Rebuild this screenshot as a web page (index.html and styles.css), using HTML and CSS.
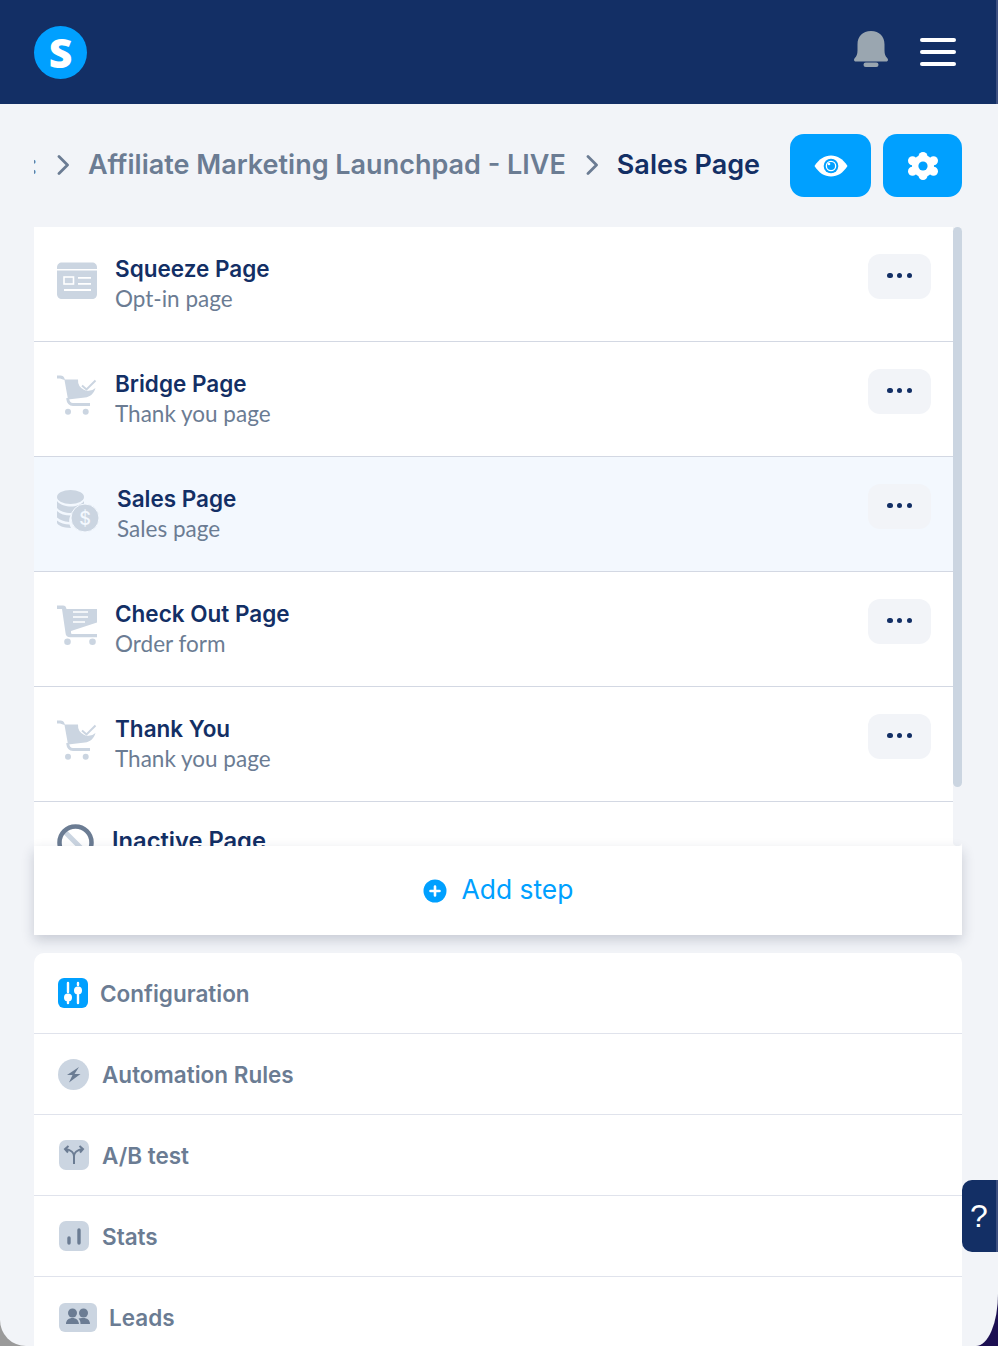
FILE: index.html
```html
<!DOCTYPE html>
<html lang="en">
<head>
    <meta charset="UTF-8">
    <meta name="viewport" content="width=device-width, initial-scale=1.0">
    <title>Sales Page</title>
    <link rel="stylesheet" href="styles.css">
</head>
<body>
    <div class="page">
        <header class="topbar">
            <div class="logo">S</div>
            <div class="topbar-actions">
                <svg class="bell" viewBox="0 0 34 36" width="34" height="36">
                    <path d="M17 0C8.500 0 3.500 5.500 3.500 13.500v6c0 3.500-1 6-2.700 7.500C-.5 28.500-.3 30.500 2 30.500h30c2.300 0 2.500-2 1.200-3.500-1.700-1.500-2.700-4-2.700-7.500v-6C30.500 5.500 25.500 0 17 0z" fill="#9aa6b0"/>
                    <rect x="9.500" y="31.500" width="15" height="4.500" rx="2.200" fill="#9aa6b0"/>
                </svg>
                <div class="burger"><span></span><span></span><span></span></div>
            </div>
        </header>

        <div class="crumb-row">
            <nav class="crumbs">
                <span class="crumb-cut">:</span>
                <svg class="chev" viewBox="0 0 12 20" width="12" height="20"><path d="M2 1.500l8.500 8.500L2 18.500" fill="none" stroke="#6b7c93" stroke-width="2.800" stroke-linecap="round" stroke-linejoin="round"/></svg>
                <span class="crumb">Affiliate Marketing Launchpad - LIVE</span>
                <svg class="chev" viewBox="0 0 12 20" width="12" height="20"><path d="M2 1.500l8.500 8.500L2 18.500" fill="none" stroke="#6b7c93" stroke-width="2.800" stroke-linecap="round" stroke-linejoin="round"/></svg>
                <span class="crumb current">Sales Page</span>
            </nav>
            <button class="blue-btn eye-btn">
                <svg viewBox="0 0 34 22" width="34" height="22">
                    <path d="M0.500 11C5 4 10.500 0.500 17 0.500S29 4 33.500 11C29 18 23.500 21.500 17 21.500S5 18 0.500 11z" fill="#fff"/>
                    <circle cx="17" cy="11" r="7.300" fill="#00a0ff"/>
                    <circle cx="17" cy="11" r="5.300" fill="#fff"/>
                    <circle cx="17" cy="11" r="4" fill="#00a0ff"/>
                    <circle cx="15" cy="9" r="1.300" fill="#fff"/>
                </svg>
            </button>
            <button class="blue-btn gear-btn">
                <svg viewBox="0 0 30 28" width="30" height="28">
                    <g fill="#fff">
                        <circle cx="15" cy="14" r="11"/>
                        <circle cx="15" cy="4.500" r="4.500"/>
                        <circle cx="15" cy="23.500" r="4.500"/>
                        <circle cx="4.500" cy="8.800" r="4.500"/>
                        <circle cx="25.500" cy="8.800" r="4.500"/>
                        <circle cx="4.500" cy="19.200" r="4.500"/>
                        <circle cx="25.500" cy="19.200" r="4.500"/>
                    </g>
                    <circle cx="15" cy="14" r="4.600" fill="#00a0ff"/>
                </svg>
            </button>
        </div>

        <section class="steps-card">
            <div class="steps">
                <div class="step">
                    <svg class="step-icon" viewBox="0 -2 40 41" width="40" height="41">
                        <path d="M0 5.500C0 2.500 2 0.500 5 0.500h30c3 0 5 2 5 5V7H0z" fill="#cbd5e1"/>
                        <path d="M0 8.500h40V32c0 3-2 5-5 5H5c-3 0-5-2-5-5z" fill="#cbd5e1"/>
                        <rect x="7" y="15" width="9.500" height="7" fill="none" stroke="#fff" stroke-width="1.600"/>
                        <path d="M21 15.800h13M21 21.800h13M7 28h27" stroke="#fff" stroke-width="1.800"/>
                    </svg>
                    <div class="step-text">
                        <h3>Squeeze Page</h3>
                        <p>Opt-in page</p>
                    </div>
                    <button class="more-btn"><span></span><span></span><span></span></button>
                </div>
                <div class="step">
                    <svg class="step-icon" viewBox="0 0 40 40" width="40" height="40">
                        <path d="M0 0.500h3.500c2 0 3.500 1 4 3l.3 1H21A10.500 10.500 0 0 0 38.500 13C37 18.500 33 22 28 22.500L11 24.500 7.500 5 3 3.500H0z" fill="#cbd5e1"/>
                        <path d="M10.500 23c.5 4 1.500 6.500 5.500 6.500h17" fill="none" stroke="#cbd5e1" stroke-width="2.800"/>
                        <circle cx="11" cy="36.700" r="3" fill="#cbd5e1"/>
                        <circle cx="28.700" cy="36.700" r="3" fill="#cbd5e1"/>
                        <path d="M25 10.500l4.500 4 9-9" fill="none" stroke="#cbd5e1" stroke-width="2"/>
                    </svg>
                    <div class="step-text">
                        <h3>Bridge Page</h3>
                        <p>Thank you page</p>
                    </div>
                    <button class="more-btn"><span></span><span></span><span></span></button>
                </div>
                <div class="step is-active">
                    <svg class="step-icon" viewBox="0 0 42 42" width="42" height="42">
                        <ellipse cx="13.500" cy="7" rx="13.500" ry="7" fill="#cbd5e1"/>
                        <path d="M0 11c3 4 9 5.500 14 5.500s10-1.500 13-5.500v4c-7 1-10 4-12.500 8C8 23 3 21.500 0 18zM0 21c3 3 8 4.500 13.500 4.500-1 2-1.500 4-1.300 6.500C7 31.500 3 30 0 27.500zM0 30.500c3 2.500 8 4 12.500 4 .5 1.500 1 2.500 1.500 3.500-8 0-14-3-14-5.500z" fill="#cbd5e1"/>
                        <circle cx="28" cy="28" r="14" fill="#cbd5e1" stroke="#f3f8fe" stroke-width="1"/>
                        <text class="coin-sign" x="28" y="34.500" text-anchor="middle">$</text>
                    </svg>
                    <div class="step-text">
                        <h3>Sales Page</h3>
                        <p>Sales page</p>
                    </div>
                    <button class="more-btn"><span></span><span></span><span></span></button>
                </div>
                <div class="step">
                    <svg class="step-icon" viewBox="0 0 40 40" width="40" height="40">
                        <path d="M0 0.500h6c2 0 3 1 3.500 3.500H40v13.500L14 26v1.500c0 1 .5 1.500 1.500 1.500H40v3.200H13.500c-3 0-5-1.500-5-4.500L5 4H0z" fill="#cbd5e1"/>
                        <circle cx="10.500" cy="36.700" r="3.300" fill="#cbd5e1"/>
                        <circle cx="35.500" cy="36.700" r="3.300" fill="#cbd5e1"/>
                        <path d="M16 7h15M16 12h15M16 17h12" stroke="#fff" stroke-width="1.600"/>
                    </svg>
                    <div class="step-text">
                        <h3>Check Out Page</h3>
                        <p>Order form</p>
                    </div>
                    <button class="more-btn"><span></span><span></span><span></span></button>
                </div>
                <div class="step">
                    <svg class="step-icon" viewBox="0 0 40 40" width="40" height="40">
                        <path d="M0 0.500h3.500c2 0 3.500 1 4 3l.3 1H21A10.500 10.500 0 0 0 38.500 13C37 18.500 33 22 28 22.500L11 24.500 7.500 5 3 3.500H0z" fill="#cbd5e1"/>
                        <path d="M10.500 23c.5 4 1.500 6.500 5.500 6.500h17" fill="none" stroke="#cbd5e1" stroke-width="2.800"/>
                        <circle cx="11" cy="36.700" r="3" fill="#cbd5e1"/>
                        <circle cx="28.700" cy="36.700" r="3" fill="#cbd5e1"/>
                        <path d="M25 10.500l4.500 4 9-9" fill="none" stroke="#cbd5e1" stroke-width="2"/>
                    </svg>
                    <div class="step-text">
                        <h3>Thank You</h3>
                        <p>Thank you page</p>
                    </div>
                    <button class="more-btn"><span></span><span></span><span></span></button>
                </div>
                <div class="step is-inactive">
                    <svg class="step-icon" viewBox="0 0 37 37" width="37" height="37">
                        <path d="M8 8l21 21" stroke="#cbd5e1" stroke-width="5"/>
                        <circle cx="18.500" cy="18.500" r="16" fill="none" stroke="#6b7c93" stroke-width="4.500"/>
                    </svg>
                    <div class="step-text">
                        <h3>Inactive Page</h3>
                    </div>
                </div>
            </div>
            <div class="scroll-track"><div class="scroll-thumb"></div></div>
        </section>

        <div class="add-step">
            <svg viewBox="0 0 24 24" width="24" height="24">
                <circle cx="12" cy="12" r="11.500" fill="#00a0ff"/>
                <path d="M12 7.500v9M7.500 12h9" stroke="#fff" stroke-width="2.600" stroke-linecap="round"/>
            </svg>
            <span>Add step</span>
        </div>

        <section class="menu-card">
            <div class="menu-row">
                <svg class="icon-config" viewBox="0 0 30 30" width="30" height="30">
                    <rect width="30" height="30" rx="6" fill="#00a0ff"/>
                    <path d="M10 5v9M10 24v1M20 5v2M20 17v8" stroke="#fff" stroke-width="2.400" stroke-linecap="round"/>
                    <circle cx="10" cy="19.500" r="4" fill="#fff"/>
                    <circle cx="20" cy="12.500" r="4" fill="#fff"/>
                </svg>
                <span>Configuration</span>
            </div>
            <div class="menu-row">
                <svg class="icon-auto" viewBox="0 0 31 31" width="31" height="31">
                    <circle cx="15.500" cy="15.500" r="15.500" fill="#cbd5e1"/>
                    <path d="M21 8L9 16h5.500L11 23.500 22.500 15h-6z" fill="#6b7c93"/>
                </svg>
                <span>Automation Rules</span>
            </div>
            <div class="menu-row">
                <svg class="icon-square" viewBox="0 0 30 30" width="30" height="30">
                    <rect width="30" height="30" rx="7" fill="#cbd5e1"/>
                    <path d="M15 24v-8c0-3-3-6-8-7M15 16c0-3 3-6 8-7M9.500 6L6 9l3 3.500M20.500 6L24 9l-3 3.500" fill="none" stroke="#6b7c93" stroke-width="2"/>
                </svg>
                <span>A/B test</span>
            </div>
            <div class="menu-row">
                <svg class="icon-square" viewBox="0 0 30 30" width="30" height="30">
                    <rect width="30" height="30" rx="7" fill="#cbd5e1"/>
                    <path d="M10 17v5M20 9v13" stroke="#6b7c93" stroke-width="3.400" stroke-linecap="round"/>
                </svg>
                <span>Stats</span>
            </div>
            <div class="menu-row">
                <svg class="icon-leads" viewBox="0 0 38 29" width="38" height="29">
                    <rect width="38" height="29" rx="6" fill="#cbd5e1"/>
                    <circle cx="13.500" cy="10" r="4.500" fill="#6b7c93"/>
                    <circle cx="24.500" cy="10" r="4.500" fill="#6b7c93"/>
                    <path d="M7 21c0-4 3-6 6.500-6s6 2 6.500 6zM21.500 21c0-2.500-.5-4-2-5.500 1.500-.5 3-.7 5-.5 3.500 0 6.500 2 6.500 6z" fill="#6b7c93"/>
                </svg>
                <span>Leads</span>
            </div>
        </section>

        <div class="help-tab">?</div>
    </div>
</body>
</html>
```

FILE: styles.css
```css
* {
    margin: 0;
    padding: 0;
    box-sizing: border-box;
    font-family: 'Inter', sans-serif;
}

html {
    height: 100%;
    background: linear-gradient(90deg, #9a9a9a 50%, #1c0f52 50%);
}

body {
    height: 100vh;
    overflow: hidden;
}

button {
    border: none;
    cursor: pointer;
}

.page {
    position: relative;
    height: 100vh;
    background: #f2f4f8;
    border-radius: 0 0 22px 26px / 0 0 52px 26px;
    overflow: hidden;
}

.topbar {
    height: 104px;
    background: #132f65;
    border-right: 2px solid #3d5080;
    display: flex;
    align-items: center;
    justify-content: space-between;
    padding: 0 40px 0 34px;
}

.logo {
    width: 53px;
    height: 53px;
    border-radius: 50%;
    background: #00a0ff;
    color: #fff;
    font-family: 'Open Sans', sans-serif;
    font-size: 41px;
    font-weight: 800;
    line-height: 53px;
    text-align: center;
}

.topbar-actions {
    display: flex;
    align-items: center;
    gap: 32px;
}

.bell {
    margin-bottom: 6px;
}

.burger {
    width: 36px;
    display: flex;
    flex-direction: column;
    gap: 8px;
}

.burger span {
    height: 4px;
    border-radius: 2px;
    background: #fff;
}

.crumb-row {
    display: flex;
    align-items: center;
    height: 63px;
    margin: 30px 36px 30px 34px;
}

.crumbs {
    flex: 1;
    display: flex;
    align-items: center;
    padding-bottom: 2px;
    overflow: hidden;
    color: #6b7c93;
    font-size: 27px;
    font-weight: 600;
    white-space: nowrap;
}

.crumb-cut {
    width: 28px;
    margin-left: -5px;
}

.chev {
    flex: none;
}

.crumb {
    margin-left: 19px;
    margin-right: 20px;
}

.crumb.current {
    color: #132f65;
    margin-right: 0;
}

.blue-btn {
    height: 63px;
    border-radius: 14px;
    background: #00a0ff;
    display: flex;
    align-items: center;
    justify-content: center;
}

.eye-btn {
    width: 81px;
    margin-right: 12px;
}

.gear-btn {
    width: 79px;
}

.steps-card {
    display: flex;
    height: 619px;
    margin: 0 36px 0 34px;
    background: #fff;
}

.steps {
    flex: 1;
    overflow: hidden;
}

.step {
    height: 115px;
    display: flex;
    align-items: flex-start;
    padding: 27px 22px 0 23px;
    border-bottom: 1px solid #d3d8e3;
}

.step.is-active {
    background: #f3f8fe;
}

.step.is-inactive {
    padding-top: 22px;
    border-bottom: none;
}

.step-icon {
    flex: none;
    margin-top: 6px;
}

.is-inactive .step-icon {
    margin-top: 0;
}

.step-text {
    flex: 1;
    margin-left: 18px;
}

.is-inactive .step-text {
    padding-top: 2px;
}

.step-text h3 {
    color: #132f65;
    font-size: 22.500px;
    font-weight: 600;
    line-height: 30px;
}

.is-inactive h3 {
    font-size: 23.700px;
}

.step-text p {
    color: #6b7c93;
    font-family: 'Lato', sans-serif;
    font-size: 22.500px;
    line-height: 30px;
}

.coin-sign {
    fill: #f3f8fe;
    font-size: 18px;
    font-weight: 500;
}

.more-btn {
    width: 63px;
    height: 45px;
    border-radius: 12px;
    background: #f2f4f8;
    display: flex;
    align-items: center;
    justify-content: center;
    gap: 4.250px;
    padding-bottom: 2px;
}

.more-btn span {
    width: 5.500px;
    height: 5.500px;
    border-radius: 50%;
    background: #132f65;
}

.scroll-track {
    flex: none;
    width: 9px;
    background: #f2f4f8;
    border-radius: 0 0 4px 4px;
}

.scroll-thumb {
    height: 560px;
    border-radius: 5px;
    background: #cbd5e1;
}

.add-step {
    position: relative;
    z-index: 1;
    height: 89px;
    margin: 0 36px 0 34px;
    background: #fff;
    box-shadow: 0 5px 12px rgba(30, 40, 70, 0.2);
    display: flex;
    align-items: center;
    justify-content: center;
    gap: 15px;
    color: #00a0ff;
    font-family: 'Lato', sans-serif;
    font-size: 26.400px;
}

.add-step span {
    margin-bottom: 4px;
}

.menu-card {
    margin: 18px 36px 0 34px;
    background: #fff;
    border-radius: 10px 10px 0 0;
}

.menu-row {
    height: 81px;
    display: flex;
    align-items: center;
    gap: 12px;
    padding-left: 24px;
    border-bottom: 1px solid #e0e3ec;
    color: #6b7c93;
    font-size: 22.500px;
    font-weight: 600;
}

.icon-square {
    margin-left: 1px;
    margin-right: 1px;
}

.icon-leads {
    margin-left: 1px;
}

.icon-auto {
    margin-right: 1px;
}

.help-tab {
    position: absolute;
    top: 1180px;
    right: 0;
    width: 36px;
    height: 72px;
    background: #132f65;
    border-right: 2px solid #3d5080;
    border-radius: 10px 0 0 10px;
    color: #fff;
    font-family: 'Liberation Sans', sans-serif;
    font-size: 32px;
    line-height: 72px;
    text-align: center;
}
```
